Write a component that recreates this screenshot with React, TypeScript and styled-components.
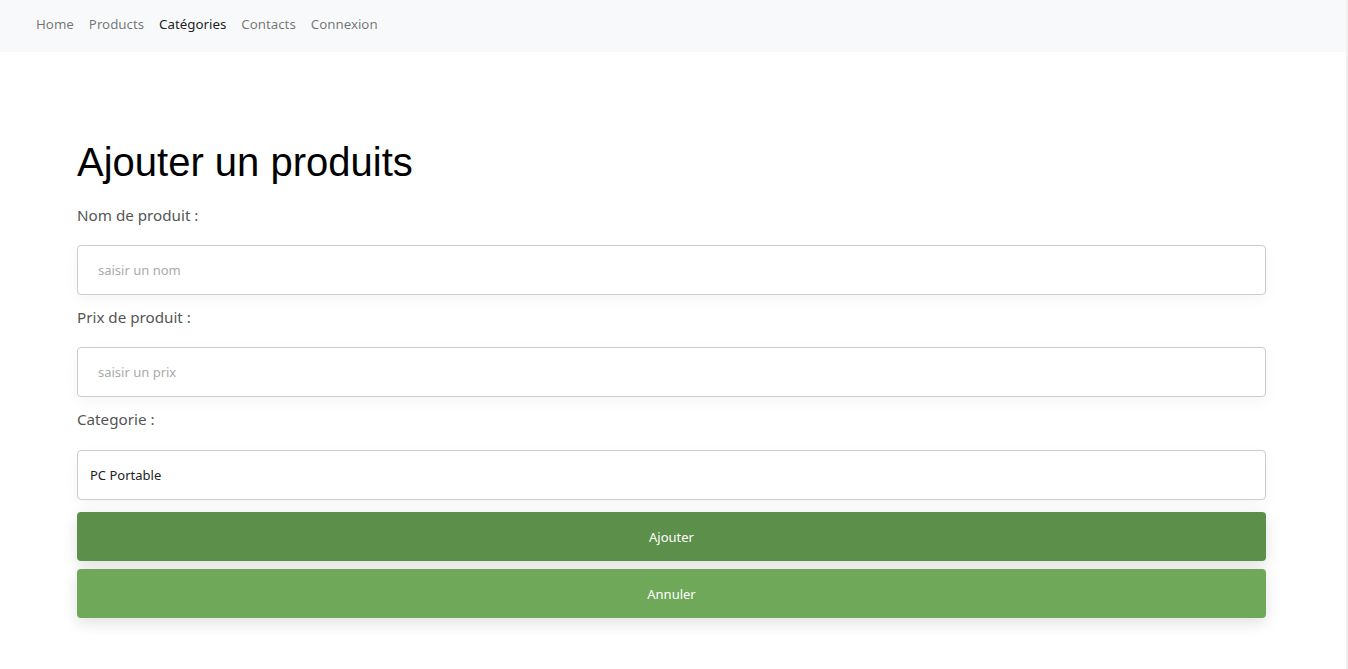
import React from "react";
import styled, { createGlobalStyle } from "styled-components";

const Global = createGlobalStyle`
  html, body { margin: 0; padding: 0; background: #fff; }
  body { font-family: "Noto Sans", "Open Sans", sans-serif; }
  * { box-sizing: border-box; }
`;

const Page = styled.div`
  min-height: 669px;
  border-right: 2px solid #f1f1f1;
`;

const NavBar = styled.nav`
  height: 52px;
  background: #f8f9fa;
  display: flex;
  align-items: center;
  padding: 0 0 4px 36px;
  gap: 15px;
`;

const NavLink = styled.a<{ $active?: boolean }>`
  font-size: 13.3px;
  color: ${(p) => (p.$active ? "rgba(0,0,0,0.9)" : "rgba(0,0,0,0.55)")};
  text-decoration: none;
  cursor: pointer;
  line-height: 20px;
`;

const Main = styled.main`
  width: 1189px;
  margin-left: 77px;
  padding-top: 86px;
  display: flex;
  flex-direction: column;
`;

const Title = styled.h1`
  font-family: "Liberation Sans", Arial, sans-serif;
  font-weight: 400;
  font-size: 40px;
  line-height: 48px;
  margin: 0 0 17px;
  color: #000;
`;

const Label = styled.label`
  font-size: 15.2px;
  color: #555;
  line-height: 24px;
  margin-bottom: 18px;
`;

const Field = styled.input`
  height: 50px;
  width: 100%;
  border: 1px solid #ccc;
  border-radius: 4px;
  padding: 0 20px;
  font-family: inherit;
  font-size: 13px;
  color: #333;
  box-shadow: 0 5px 15px rgba(0, 0, 0, 0.04);
  margin-bottom: 10px;
  outline: none;
  &::placeholder { color: #aaa; }
`;

const Select = styled.select`
  height: 50px;
  width: 100%;
  border: 1px solid #ccc;
  border-radius: 4px;
  padding: 0 12px;
  font-family: inherit;
  font-size: 13px;
  color: #222;
  background: #fff;
  appearance: none;
  box-shadow: 0 5px 15px rgba(0, 0, 0, 0.04);
  margin: 1px 0 12px;
  outline: none;
`;

const Button = styled.button<{ $tone: "dark" | "light" }>`
  height: 49px;
  width: 100%;
  border: none;
  border-radius: 4px;
  background: ${(p) => (p.$tone === "dark" ? "#5c8f4a" : "#70a85a")};
  color: #fff;
  font-family: inherit;
  font-size: 13px;
  box-shadow: 0 5px 15px rgba(0, 0, 0, 0.12);
  margin-bottom: 8px;
  cursor: pointer;
`;

export default function App() {
  return (
    <Page>
      <Global />
      <NavBar>
        <NavLink>Home</NavLink>
        <NavLink>Products</NavLink>
        <NavLink $active>Catégories</NavLink>
        <NavLink>Contacts</NavLink>
        <NavLink>Connexion</NavLink>
      </NavBar>
      <Main>
        <Title>Ajouter un produits</Title>
        <Label>Nom de produit :</Label>
        <Field placeholder="saisir un nom" />
        <Label>Prix de produit :</Label>
        <Field placeholder="saisir un prix" />
        <Label>Categorie :</Label>
        <Select defaultValue="pc">
          <option value="pc">PC Portable</option>
        </Select>
        <Button $tone="dark">Ajouter</Button>
        <Button $tone="light">Annuler</Button>
      </Main>
    </Page>
  );
}
